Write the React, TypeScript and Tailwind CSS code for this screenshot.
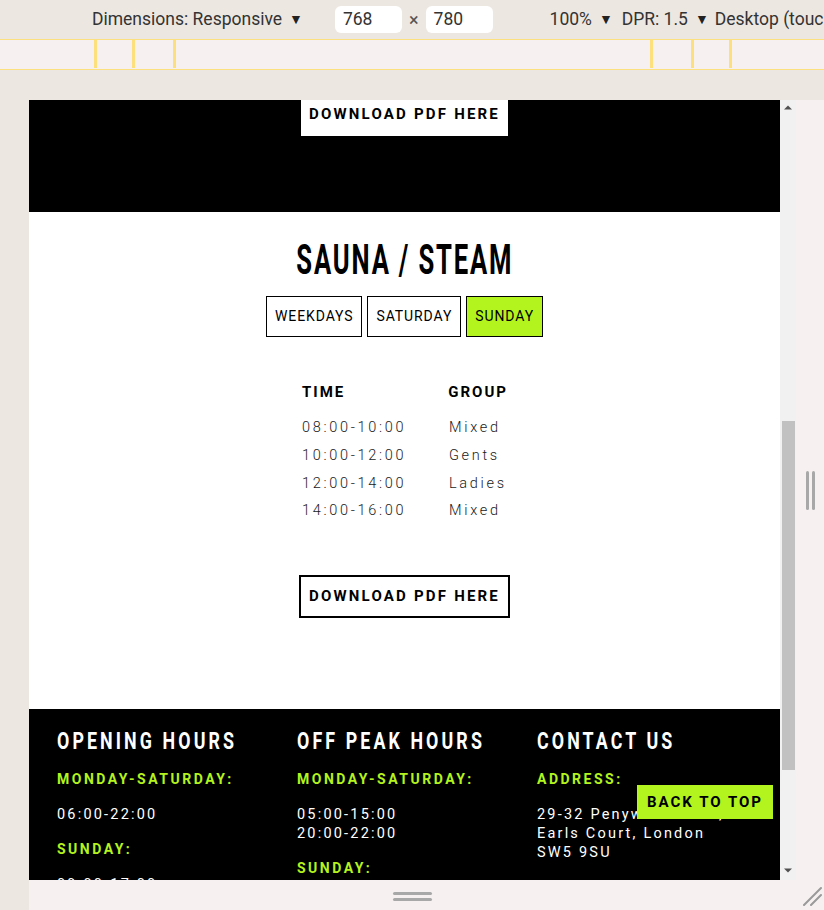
import { ReactNode } from 'react'

const rows = [
  { time: '08:00-10:00', group: 'Mixed' },
  { time: '10:00-12:00', group: 'Gents' },
  { time: '12:00-14:00', group: 'Ladies' },
  { time: '14:00-16:00', group: 'Mixed' },
]

const tabs = [
  { name: 'WEEKDAYS', active: false },
  { name: 'SATURDAY', active: false },
  { name: 'SUNDAY', active: true },
]

function Caret() {
  return <span className="ml-[7px] text-[14px] text-[#222]">▼</span>
}

function FooterHeading({ children }: { children: ReactNode }) {
  return (
    <h3 className="origin-left scale-x-[0.775] whitespace-nowrap text-[23px] font-bold leading-[24px] tracking-[4px] text-white">
      {children}
    </h3>
  )
}

function Label({ children }: { children: ReactNode }) {
  return (
    <p className="mt-[16px] text-[14px] font-bold leading-[19px] tracking-[2.5px] text-[#b3f41e]">
      {children}
    </p>
  )
}

function Value({ children }: { children: ReactNode }) {
  return (
    <p className="mt-[16px] text-[14.5px] leading-[19px] tracking-[2.2px] text-white">{children}</p>
  )
}

export default function App() {
  return (
    <div className="relative h-[910px] w-[824px] overflow-hidden bg-[#ede7e1] font-['Roboto',sans-serif]">
      {/* devtools toolbar */}
      <div className="flex h-[39px] items-center whitespace-nowrap text-[17.5px] text-[#333]">
        <span className="ml-[92px] flex items-center">
          Dimensions: Responsive
          <Caret />
        </span>
        <div className="ml-[32px] flex h-[27px] w-[67px] shrink-0 items-center rounded-[6px] bg-white pl-[8px]">768</div>
        <span className="mx-[7px] text-[18px] text-[#555]">×</span>
        <div className="flex h-[27px] w-[67px] shrink-0 items-center rounded-[6px] bg-white pl-[8px]">780</div>
        <span className="ml-[57px] flex items-center">
          100%
          <Caret />
        </span>
        <span className="ml-[9px] flex items-center">
          DPR: 1.5
          <Caret />
        </span>
        <span className="ml-[6px]">Desktop (touch)</span>
      </div>

      {/* ruler */}
      <div className="relative h-[31px] border-y border-[#fcdf7e] bg-[#f6f1f0]">
        {[94, 132, 173, 650, 691, 729].map((x) => (
          <div key={x} className="absolute top-0 h-[28px] w-[3px] bg-[#fddf7c]" style={{ left: x }} />
        ))}
      </div>

      <div className="h-[30px]" />

      <div className="flex pl-[29px]">
        {/* viewport */}
        <div className="relative h-[780px] w-[751px] overflow-hidden bg-white">
          <section className="flex h-[112px] flex-col items-center bg-black">
            <a className="mt-[-7px] flex h-[43px] w-[207px] items-center justify-center bg-white text-[15px] font-bold tracking-[2.2px] text-black">
              DOWNLOAD PDF HERE
            </a>
          </section>

          <section className="flex flex-col items-center pb-[91px] pt-[24px] text-[#1a1a1a]">
            <h2 className="scale-x-[0.61] whitespace-nowrap text-[42px] font-bold leading-[48px] tracking-[3px] text-black">
              SAUNA / STEAM
            </h2>
            <div className="mt-[12px] flex gap-[5px]">
              {tabs.map((tab) => (
                <button
                  key={tab.name}
                  className={
                    tab.active
                      ? 'h-[41px] border border-black bg-[#b3f41e] px-[8px] text-[14px] tracking-[0.9px] text-black'
                      : 'h-[41px] border border-black bg-white px-[8px] text-[14px] tracking-[0.9px] text-black'
                  }
                >
                  {tab.name}
                </button>
              ))}
            </div>

            <div className="mt-[45px] w-[207px] pl-[1px]">
              <div className="flex h-[20px] items-center text-[15px] font-bold tracking-[2px] text-black">
                <span className="w-[147px]">TIME</span>
                <span>GROUP</span>
              </div>
              <div className="mt-[12px]">
                {rows.map((row) => (
                  <div key={row.time} className="flex h-[27.8px] items-center text-[14.5px] font-light tracking-[2.7px]">
                    <span className="w-[147px]">{row.time}</span>
                    <span>{row.group}</span>
                  </div>
                ))}
              </div>
            </div>

            <a className="mt-[50px] flex h-[43px] w-[211px] items-center justify-center border-2 border-black text-[15px] font-bold tracking-[2.2px] text-black">
              DOWNLOAD PDF HERE
            </a>
          </section>

          <footer className="grid grid-cols-[240px_240px_240px] bg-black pl-[28px] pt-[21px]">
            <div>
              <FooterHeading>OPENING HOURS</FooterHeading>
              <Label>MONDAY-SATURDAY:</Label>
              <Value>06:00-22:00</Value>
              <Label>SUNDAY:</Label>
              <Value>09:00-17:00</Value>
            </div>
            <div>
              <FooterHeading>OFF PEAK HOURS</FooterHeading>
              <Label>MONDAY-SATURDAY:</Label>
              <Value>
                05:00-15:00
                <br />
                20:00-22:00
              </Value>
              <Label>SUNDAY:</Label>
              <Value>09:00-17:00</Value>
            </div>
            <div>
              <FooterHeading>CONTACT US</FooterHeading>
              <Label>ADDRESS:</Label>
              <Value>
                29-32 Penywern Road,
                <br />
                Earls Court, London
                <br />
                SW5 9SU
              </Value>
            </div>
          </footer>

          <a className="absolute bottom-[61px] right-[7px] flex h-[34px] w-[136px] items-center justify-center bg-[#b3f41e] text-[15px] font-bold tracking-[2px] text-black">
            BACK TO TOP
          </a>
        </div>

        {/* scrollbar */}
        <div className="relative h-[780px] w-[16px] bg-[#f1f1f1]">
          <svg className="absolute left-[4px] top-[5px]" width="8" height="5" viewBox="0 0 8 5">
            <path d="M0 4.5 L4 0.5 L8 4.5 Z" fill="#505050" />
          </svg>
          <div className="absolute left-[2px] top-[321px] h-[349px] w-[13px] bg-[#c1c1c1]" />
          <svg className="absolute bottom-[7px] left-[4px]" width="8" height="5" viewBox="0 0 8 5">
            <path d="M0 0.5 L4 4.5 L8 0.5 Z" fill="#505050" />
          </svg>
        </div>

        {/* right resize handle */}
        <div className="flex h-[780px] w-[28px] items-center justify-center gap-[3px] bg-[#f6f1f0]">
          <div className="h-[39px] w-[3px] rounded-full bg-[#a8a8a8]" />
          <div className="h-[39px] w-[3px] rounded-full bg-[#a8a8a8]" />
        </div>
      </div>

      {/* bottom resize handle */}
      <div className="relative ml-[29px] flex h-[30px] flex-col items-center gap-[3px] bg-[#f6f1f0] pr-[28px] pt-[12px]">
        <div className="h-[3px] w-[39px] rounded-full bg-[#a8a8a8]" />
        <div className="h-[3px] w-[39px] rounded-full bg-[#a8a8a8]" />
        <svg className="absolute bottom-[4px] right-[2px]" width="20" height="20" viewBox="0 0 20 20">
          <path d="M19 2 L2 19 M19 9 L9 19" stroke="#9a9a9a" strokeWidth="2" strokeLinecap="round" />
        </svg>
      </div>
    </div>
  )
}
